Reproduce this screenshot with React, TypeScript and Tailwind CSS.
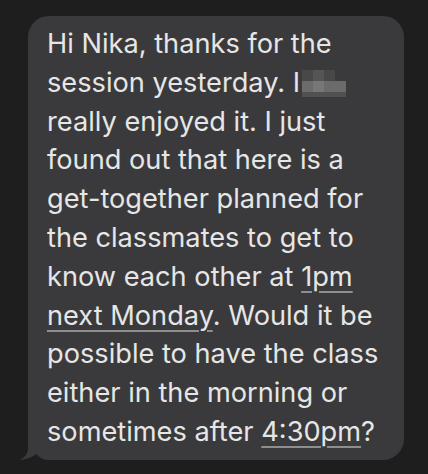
import React from 'react';

// pixelated block that hides the blurred-out word after "I"
const Blur: React.FC = () => (
  <span className="relative inline-block w-[46px] h-[27px] align-[-5px] ml-[2px]">
    <span className="absolute left-0 top-0 w-[33px] h-[11px] bg-[#484848]" />
    <span className="absolute left-[11px] top-0 w-[11px] h-[11px] bg-[#555555]" />
    <span className="absolute left-0 top-[11px] w-[44px] h-[11px] bg-[#6b6b6b]" />
    <span className="absolute left-[11px] top-[11px] w-[11px] h-[11px] bg-[#777777]" />
    <span className="absolute left-0 top-[22px] w-[44px] h-[5px] bg-[#515151]" />
  </span>
);

const Link: React.FC<{ children: React.ReactNode }> = ({ children }) => (
  <span className="underline decoration-[#8e8e8e] decoration-[1.5px] underline-offset-[5px]">{children}</span>
);

export default function App() {
  return (
    <div className="w-[428px] h-[474px] bg-[#1e1e1e] pt-[16px] pl-[28px] overflow-hidden">
      <div className="relative w-[376px] h-[444px]">
        <div className="h-full bg-[#3a3a3c] rounded-[21px] rounded-bl-none pl-[19px] pr-[8px] pt-[9px] text-[#e6e6e6] text-[27.2px] leading-[38.8px] font-['Inter','Noto_Sans',sans-serif]">
          Hi Nika, thanks for the<br />
          session yesterday. I<Blur /><br />
          really enjoyed it. I just<br />
          found out that here is a<br />
          get-together planned for<br />
          the classmates to get to<br />
          know each other at <Link>1pm</Link><br />
          <Link>next Monday</Link>. Would it be<br />
          possible to have the class<br />
          either in the morning or<br />
          sometimes after <Link>4:30pm</Link>?
        </div>
        <svg className="absolute left-[-10px] bottom-0" width="30" height="20" viewBox="0 0 30 20">
          <path d="M10 0 L10 8 C10 14 6 18 1 20 C7 20 13 18 18 14 C22 18 26 20 30 20 L30 0 Z" fill="#3a3a3c" />
          <path d="M1 20 C7 20 13 18 18 14 C22 18 26 20 30 20 Z" fill="#1e1e1e" />
        </svg>
      </div>
    </div>
  );
}
